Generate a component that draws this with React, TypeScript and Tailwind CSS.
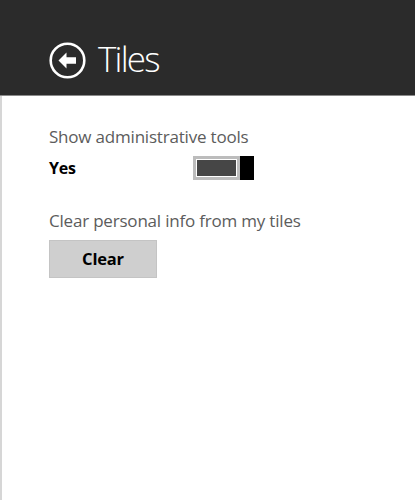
import React, { useState } from 'react';

const BackIcon = () => (
  <svg width="37" height="37" viewBox="0 0 37 37" fill="none">
    <circle cx="18.5" cy="18.5" r="16.8" stroke="white" strokeWidth="2.6" />
    <path d="M9.5 18.5 L17.5 10.5 L17.5 15.3 L27 15.3 L27 21.7 L17.5 21.7 L17.5 26.5 Z" fill="white" />
  </svg>
);

export default function App() {
  const [admin, setAdmin] = useState(true);

  return (
    <div className="w-[415px] h-[500px] bg-white flex flex-col" style={{ fontFamily: '"Open Sans", "Noto Sans", sans-serif' }}>
      <div className="h-[96px] bg-[#2b2b2b] border-b border-[#8a8a8a] flex items-end pl-[49px] pb-[16px] shrink-0">
        <button className="flex items-center gap-[12px]">
          <BackIcon />
          <span className="text-white text-[35px] leading-none font-light tracking-[-1.8px] pb-[3px]">Tiles</span>
        </button>
      </div>

      <div className="flex-1 border-l-2 border-[#d6d6d6] pl-[47px] pt-[30px]">
        <div className="text-[17px] leading-[22px] text-[#5c5c5c] tracking-[-0.2px]">Show administrative tools</div>
        <div className="flex items-center mt-[8px] h-[24px]">
          <span className="text-[16px] font-bold text-black w-[144px] tracking-[-0.2px]">{admin ? 'Yes' : 'No'}</span>
          <button onClick={() => setAdmin(!admin)} className="flex h-[24px]">
            <span className="w-[47px] h-[24px] border-[3px] border-[#bcbcbc] bg-white p-[1px] flex">
              <span className="flex-1 bg-[#464646]" />
            </span>
            <span className="w-[14px] h-[24px] bg-black" />
          </button>
        </div>

        <div className="text-[17px] leading-[22px] text-[#5c5c5c] mt-[30px] tracking-[-0.2px]">Clear personal info from my tiles</div>
        <button className="mt-[8px] w-[108px] h-[38px] bg-[#cfcfcf] border border-[#c4c4c4] text-[16.5px] font-bold text-black tracking-[-0.2px]">
          Clear
        </button>
      </div>
    </div>
  );
}
